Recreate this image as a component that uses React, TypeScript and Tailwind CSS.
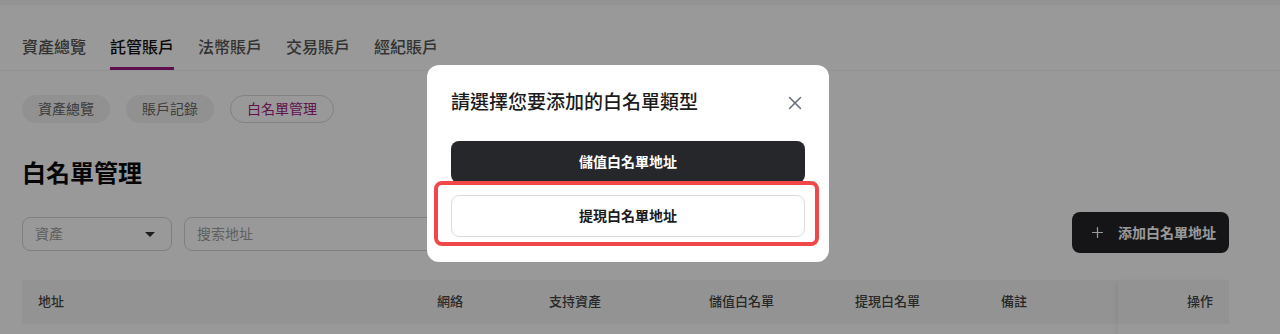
import React from 'react';
import { X, Plus } from 'lucide-react';

const font = { fontFamily: '"Inter", "Noto Sans CJK TC", "Noto Sans", sans-serif' };

const topTabs = ['資產總覽', '託管賬戶', '法幣賬戶', '交易賬戶', '經紀賬戶'];
const columns = [
  { label: '地址', w: 'w-[399px]' },
  { label: '網絡', w: 'w-[112px]' },
  { label: '支持資產', w: 'w-[160px]' },
  { label: '儲值白名單', w: 'w-[146px]' },
  { label: '提現白名單', w: 'w-[146px]' },
  { label: '備註', w: 'w-[133px]' },
];

const App: React.FC = () => {
  return (
    <div className="relative w-[1280px] h-[334px] overflow-hidden bg-white" style={font}>
      {/* page */}
      <div className="flex flex-col">
        <div className="h-[5px] bg-[#f5f5f5]"></div>
        <div className="border-b border-gray-100 pl-[22px] pt-[30px] flex gap-[24px]">
          {topTabs.map((t, i) => (
            <div key={t} className="flex flex-col">
              <span className={`text-base leading-6 font-medium ${i === 1 ? 'text-[#111]' : 'text-[#555]'}`}>{t}</span>
              <div className={`mt-[8px] h-[3px] ${i === 1 ? 'bg-[#9e1a86]' : 'bg-transparent'}`}></div>
            </div>
          ))}
        </div>

        <div className="pl-[22px] pr-[51px]">
          <div className="flex gap-4 mt-[24px]">
            <div className="h-[28px] px-4 rounded-full bg-[#f2f2f2] text-sm text-[#666] flex items-center">資產總覽</div>
            <div className="h-[28px] px-4 rounded-full bg-[#f2f2f2] text-sm text-[#666] flex items-center">賬戶記錄</div>
            <div className="h-[28px] px-4 rounded-full border border-[#d9d9d9] text-sm text-[#a3217f] flex items-center">白名單管理</div>
          </div>

          <h1 className="mt-[35px] text-2xl leading-8 font-bold text-[#0a0a0a]">白名單管理</h1>

          <div className="mt-[25px] flex items-center">
            <div className="w-[150px] h-[34px] rounded-lg border border-[#d4d4d4] flex items-center justify-between pl-3 pr-[16px] text-sm text-[#a0a0a0]">
              <span>資產</span>
              <span className="w-0 h-0 border-l-[5px] border-r-[5px] border-t-[5px] border-l-transparent border-r-transparent border-t-[#333]"></span>
            </div>
            <div className="ml-3 w-[420px] h-[34px] rounded-lg border border-[#d4d4d4] flex items-center pl-3 text-sm text-[#a0a0a0]">
              搜索地址
            </div>
            <div className="ml-auto -mt-[3px] h-[41px] pl-[17px] pr-[13px] rounded-lg bg-[#232327] text-white text-sm font-semibold flex items-center gap-3">
              <Plus size={17} strokeWidth={1.75} />
              <span>添加白名單地址</span>
            </div>
          </div>

          <div className="mt-[27px] flex">
            <div className="flex h-[44px] bg-[#f6f6f6]">
              {columns.map((c) => (
                <div key={c.label} className={`${c.w} pl-4 flex items-center text-[13px] font-medium text-[#444]`}>
                  {c.label}
                </div>
              ))}
            </div>
            <div className="w-[111px] h-[60px] bg-white shadow-[-4px_0_6px_-2px_rgba(0,0,0,0.06)]">
              <div className="h-[44px] bg-[#f6f6f6] flex items-center justify-end pr-4 text-[13px] font-medium text-[#444]">操作</div>
            </div>
          </div>
        </div>
      </div>

      {/* overlay */}
      <div className="absolute inset-0 bg-black/40"></div>

      {/* modal */}
      <div className="absolute left-[427px] top-[65px] w-[402px] h-[197px] bg-white rounded-xl px-6 pt-6">
        <div className="flex items-center justify-between h-7">
          <span className="text-[19px] font-medium text-[#1c1c1c]">請選擇您要添加的白名單類型</span>
          <X size={22} strokeWidth={1.75} className="text-[#6b7280] -mr-[1px]" />
        </div>
        <div className="mt-6 flex flex-col gap-3">
          <div className="h-[42px] rounded-lg bg-[#26272b] text-white text-sm font-semibold flex items-center justify-center">儲值白名單地址</div>
          <div className="h-[42px] rounded-lg border border-[#dcdcdc] bg-white text-[#1c1c1c] text-sm font-semibold flex items-center justify-center">提現白名單地址</div>
        </div>
        <div className="absolute left-[7px] top-[116px] w-[385px] h-[65px] rounded-lg border-4 border-[#f04848]"></div>
      </div>
    </div>
  );
};

export default App;
